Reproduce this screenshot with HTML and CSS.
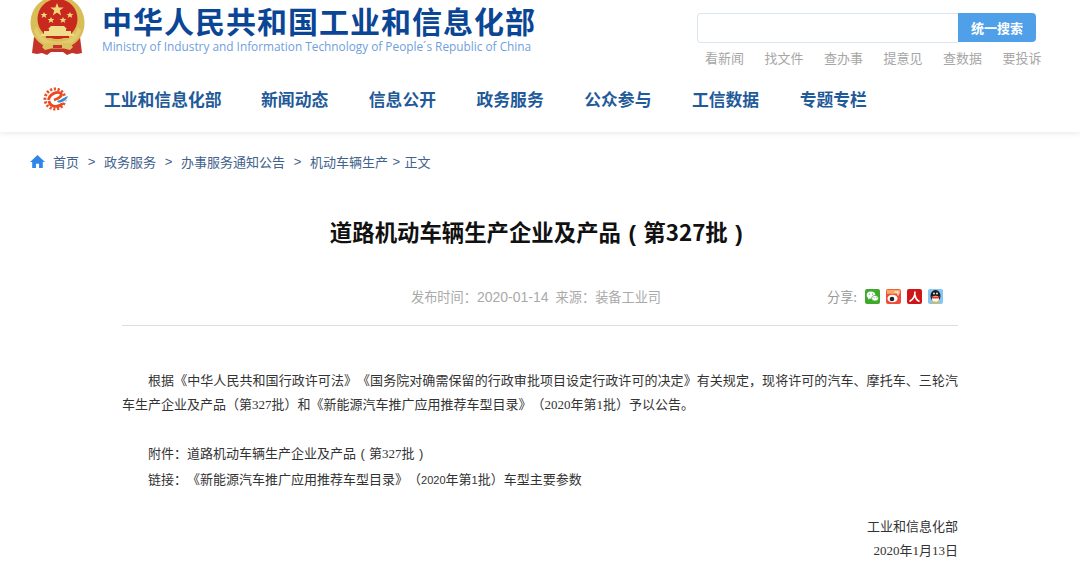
FILE: index.html
```html
<!DOCTYPE html>
<html lang="zh-CN">
<head>
  <meta charset="UTF-8">
  <title>道路机动车辆生产企业及产品（第327批）</title>
  <link rel="stylesheet" href="styles.css">
</head>
<body>
  <header class="header">
    <div class="top">
      <div class="brand">
        <svg class="emblem" viewBox="3 0 58 58" aria-hidden="true">
          <path d="M9 38l-2 16 5 1 5-1 5 2 4-3h12l4 3 5-2 5 1 5-1-2-16z" fill="#c4332b"/>
          <path d="M32.500-3C17-3 5.500 9 5.500 24c0 11 6 19 14 23h26c8-4 14-12 14-23C59.500 9 48-3 32.500-3z" fill="#d9bd57"/>
          <circle cx="32.500" cy="20" r="20" fill="#c8291f"/>
          <path d="M12 28c3 10 11 15 20.500 15S50 38 53 28l3 3c-3 11-12 17-23.500 17S12 42 9 31z" fill="#e2ca6e"/>
          <path d="M32 4l1.700 4.500h5l-4 3 1.500 5-4.200-3-4.200 3 1.500-5-4-3h5z" fill="#efd877"/>
          <path d="M19 13l1 2h2.500l-2 1.600.800 2.400-2.300-1.500-2.300 1.500.800-2.400-2-1.600H18zM45 13l1 2h2.500l-2 1.600.800 2.400-2.300-1.500-2.300 1.500.800-2.400-2-1.600H44zM26 18l1 2h2.500l-2 1.600.800 2.400-2.300-1.500-2.300 1.500.800-2.400-2-1.600H25zM38 18l1 2h2.500l-2 1.600.800 2.400-2.300-1.500-2.300 1.500.800-2.400-2-1.600H37z" fill="#efd877"/>
          <path d="M26 27h13l3 3H23zM24 30h17v2H24zM19 32h27v3H19zM16 35h33v2H16z" fill="#f0dc8a"/>
          <path d="M21 37h23v2H21z" fill="#c8291f"/>
          <path d="M20 44h25l3 4-3 3-6-1.500h-13L20 51l-3-3z" fill="#dcc25e"/>
          <path d="M28 46h9v3h-9z" fill="#c4332b"/>
        </svg>
        <div class="brand-text">
          <div class="brand-name">中华人民共和国工业和信息化部</div>
          <div class="brand-en">Ministry of Industry and Information Technology of People´s Republic of China</div>
        </div>
      </div>
      <div class="tools">
        <form class="search">
          <input class="search-input" type="text">
          <button class="search-btn" type="button">统一搜索</button>
        </form>
        <div class="quick">
          <a>看新闻</a><a>找文件</a><a>查办事</a><a>提意见</a><a>查数据</a><a>要投诉</a>
        </div>
      </div>
    </div>
    <nav class="nav">
      <svg class="nav-logo" viewBox="0 0 26 26" aria-hidden="true">
        <circle cx="12" cy="13" r="10" fill="none" stroke="#e8502a" stroke-width="3" stroke-dasharray="2.200 1.600"/>
        <path d="M5.500 14c1-6 9-9.500 12.500-6.500 1.500 2-2 5-7 6.500" fill="none" stroke="#ea4a22" stroke-width="2.800"/>
        <path d="M6 15c1 6 9 7.500 14 2" fill="none" stroke="#ea4a22" stroke-width="2.800"/>
        <path d="M12 15c5-1 9-5 14-6-1 5-6 9-12 8.500z" fill="#fff"/>
        <path d="M14 15c4-1 8-4 11-5-1 4-6 7-10 6.500z" fill="#2f8fd0"/>
      </svg>
      <a>工业和信息化部</a><a>新闻动态</a><a>信息公开</a><a>政务服务</a><a>公众参与</a><a>工信数据</a><a>专题专栏</a>
    </nav>
  </header>

  <div class="crumbs">
    <svg class="home" viewBox="0 0 16 14" aria-hidden="true"><path d="M8 0L0 7.500h2.300V14h4v-4.500h3.400V14h4V7.500H16z" fill="#2f86e8"/></svg>
    <a>首页</a><i>&gt;</i><a>政务服务</a><i>&gt;</i><a>办事服务通知公告</a><i>&gt;</i><a>机动车辆生产</a><i class="tight">&gt;</i><a>正文</a>
  </div>

  <main class="article">
    <h1>道路机动车辆生产企业及产品<span class="paren">(</span>第327批<span class="paren">)</span></h1>
    <div class="meta">
      <div class="meta-info">发布时间<span class="colon">：</span><span class="date">2020-01-14</span><span class="src">来源</span><span class="colon">：</span>装备工业司</div>
      <div class="share">
        <span>分享:</span>
        <svg viewBox="0 0 15 15" aria-hidden="true"><rect width="15" height="15" rx="2" fill="#3fa92c"/><ellipse cx="6" cy="6" rx="4.300" ry="3.500" fill="#fff"/><path d="M3.500 8.500l-.5 2 2.500-1.200z" fill="#fff"/><ellipse cx="10" cy="9.200" rx="3.400" ry="2.800" fill="#fff" stroke="#3fa92c" stroke-width=".7"/><circle cx="4.500" cy="5" r=".6" fill="#3fa92c"/><circle cx="7.500" cy="5" r=".6" fill="#3fa92c"/><circle cx="9" cy="8.800" r=".5" fill="#3fa92c"/><circle cx="11.200" cy="8.800" r=".5" fill="#3fa92c"/></svg>
        <svg viewBox="0 0 15 15" aria-hidden="true"><rect width="15" height="15" rx="2" fill="#ef4d3c"/><rect x=".8" y=".8" width="13.400" height="4" fill="#f9a860"/><path d="M8.500 3h3.500v3.500" fill="none" stroke="#fff" stroke-width="1.200"/><ellipse cx="6.500" cy="9.500" rx="5" ry="3.800" fill="#fff"/><circle cx="6" cy="10" r="2.300" fill="#222"/></svg>
        <svg viewBox="0 0 15 15" aria-hidden="true"><rect width="15" height="15" rx="2" fill="#cf1518"/><path d="M8 2.500c0 4.500-1.500 8-5.500 10M8 6c.5 3 2 5.500 4.500 6.500" fill="none" stroke="#fff" stroke-width="1.600"/></svg>
        <svg viewBox="0 0 15 15" aria-hidden="true"><rect width="15" height="15" rx="2" fill="#84c6f4"/><ellipse cx="7.500" cy="7" rx="5" ry="6" fill="#1c1c1c"/><ellipse cx="7.500" cy="10" rx="3.500" ry="3.200" fill="#fff"/><path d="M3 7.500h9l-1.500 2h-6z" fill="#e8352a"/><circle cx="6" cy="4.500" r=".9" fill="#fff"/><circle cx="9" cy="4.500" r=".9" fill="#fff"/><path d="M2.500 14l2.500-1.500h5l2.500 1.500z" fill="#f5b320"/></svg>
      </div>
    </div>
    <div class="body">
      <p class="lead">根据《中华人民共和国行政许可法》《国务院对确需保留的行政审批项目设定行政许可的决定》有关规定，现将许可的汽车、摩托车、三轮汽车生产企业及产品（第327批）和《新能源汽车推广应用推荐车型目录》（2020年第1批）予以公告。</p>
      <p class="line">附件<span class="colon">：</span>道路机动车辆生产企业及产品<span class="paren">(</span>第327批<span class="paren">)</span></p>
      <p class="line last">链接<span class="colon">：</span>《新能源汽车推广应用推荐车型目录》（<span class="sans">2020</span>年第<span class="sans">1</span>批）车型主要参数</p>
      <p class="sign">工业和信息化部</p>
      <p class="sign">2020年1月13日</p>
    </div>
  </main>
</body>
</html>
```

FILE: styles.css
```css
html, body { margin: 0; height: 583px; overflow: hidden; }
body { background: #fff; font-family: "Noto Sans CJK SC", sans-serif; color: #333; text-spacing-trim: space-all; }
p, h1 { margin: 0; }

.header { height: 132px; box-shadow: 0 1px 6px rgba(0, 0, 0, .1); }
.top { display: flex; justify-content: space-between; height: 69px; padding: 0 44px 0 28px; }
.brand { display: flex; gap: 16px; }
.emblem { width: 58px; height: 58px; margin-top: -1px; }
.brand-name { font-size: 30px; line-height: 36px; padding-top: 2px; font-weight: 700; letter-spacing: 1px; color: #0b4696; }
.brand-en { font-family: "Open Sans", sans-serif; font-size: 11.830px; line-height: 14px; margin-top: 1px; color: #6f9fdc; white-space: nowrap; }

.tools { width: 339px; padding-top: 13px; }
.search { display: flex; height: 30px; }
.search-input { flex: 1; box-sizing: border-box; height: 30px; border: 1px solid #dbe6f1; border-right: 0; border-radius: 4px 0 0 4px; outline: 0; padding: 0; }
.search-btn { width: 78px; height: 29px; border: 0; border-radius: 0 4px 4px 0; background: #4f9fe9; color: #fff; font: 700 13px "Noto Sans CJK SC", sans-serif; }
.quick { display: flex; gap: 20.500px; padding: 6px 0 0 8px; font-size: 13px; line-height: 18px; color: #a6a6a6; white-space: nowrap; }

.nav { display: flex; align-items: center; gap: 40.600px; height: 60px; padding-left: 43px; font-size: 16.800px; font-weight: 700; color: #1f5a99; white-space: nowrap; }
.nav-logo { width: 26px; height: 26px; margin-right: -5.600px; }
.nav a:first-of-type { margin-right: -1px; }

.crumbs { display: flex; align-items: center; margin-top: 20px; padding-left: 30px; height: 18px; font-size: 13px; color: #41628c; white-space: nowrap; }
.crumbs i { font-style: normal; margin: 0 8.700px; font-family: "Liberation Sans", sans-serif; }
.crumbs i.tight { margin: 0 4.500px; }
.home { width: 15px; height: 13px; margin-right: 8px; }

.article { width: 836px; margin-left: 122px; }
.article h1 { padding-top: 45px; text-align: center; font-size: 22.400px; line-height: 32px; font-weight: 700; color: #111; }
.paren { display: inline-block; width: 1em; text-align: center; font-family: "Liberation Sans", sans-serif; }

.meta { display: flex; justify-content: space-between; height: 39px; margin-top: 37px; border-bottom: 1px solid #ddd; box-sizing: border-box; font-size: 13.200px; line-height: 20px; color: #aaa; }
.meta-info { padding-left: 289px; }
.colon { font-family: "Noto Sans CJK TC", sans-serif; }
.date { font-family: "Liberation Sans", sans-serif; font-size: 14px; }
.src { margin-left: 7px; }
.share { display: flex; gap: 6px; align-items: flex-start; padding-right: 15px; }
.share span { margin-right: 2px; color: #999; }
.share svg { width: 15px; height: 15px; margin-top: 2px; }

.body { font-family: "Liberation Serif", "Noto Sans CJK SC", serif; font-size: 13px; line-height: 24.400px; padding-top: 42.500px; }
.lead { text-indent: 26px; text-align: justify; margin-bottom: 24px; }
.line { padding-left: 26px; }
.line.last { margin-bottom: 22.500px; }
.sans { font-family: "Liberation Sans", sans-serif; font-size: 11px; }
.sign { text-align: right; }
```
